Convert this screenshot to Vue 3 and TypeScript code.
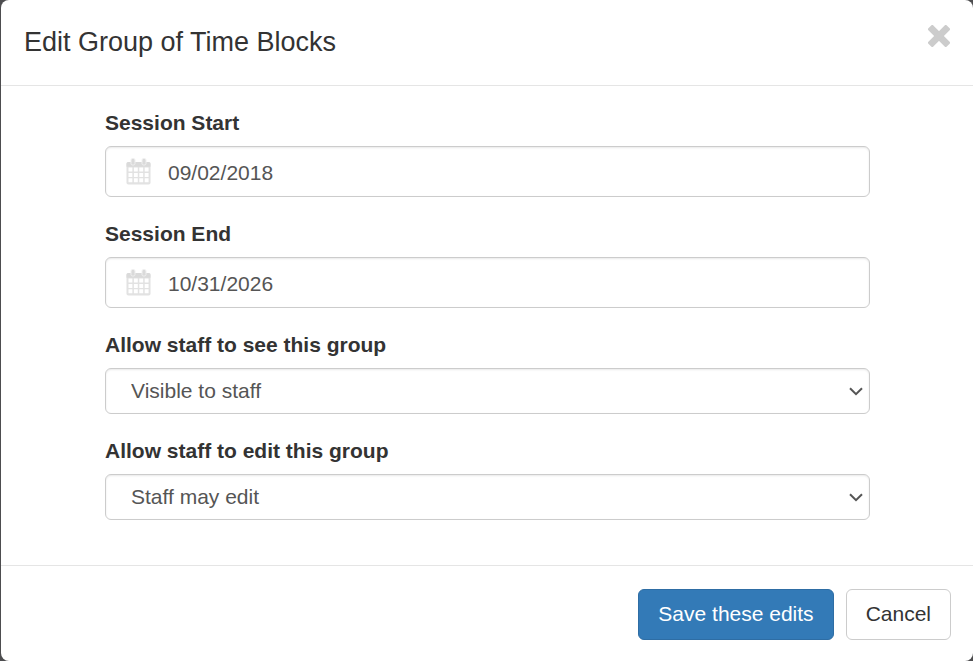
<script setup lang="ts">
import { ref } from 'vue'

interface DateField {
  id: string
  label: string
  value: string
}

interface SelectField extends DateField {
  options: string[]
}

const open = ref(true)

const dates = ref<DateField[]>([
  { id: 'session-start', label: 'Session Start', value: '09/02/2018' },
  { id: 'session-end', label: 'Session End', value: '10/31/2026' },
])

const permissions = ref<SelectField[]>([
  {
    id: 'staff-see',
    label: 'Allow staff to see this group',
    value: 'Visible to staff',
    options: ['Visible to staff', 'Hidden from staff'],
  },
  {
    id: 'staff-edit',
    label: 'Allow staff to edit this group',
    value: 'Staff may edit',
    options: ['Staff may edit', 'Staff may not edit'],
  },
])

function close(): void {
  open.value = false
}
</script>

<template>
  <div class="backdrop">
    <form v-if="open" class="dialog" role="dialog" aria-labelledby="dialog-title" @submit.prevent="close">
      <header class="header">
        <h1 id="dialog-title" class="title">Edit Group of Time Blocks</h1>
        <button type="button" class="close" aria-label="Close" @click="close">
          <svg viewBox="0 0 22 22" width="22" height="22" aria-hidden="true">
            <rect x="-2" y="7.500" width="26" height="7" rx="1.500" transform="rotate(45 11 11)" />
            <rect x="-2" y="7.500" width="26" height="7" rx="1.500" transform="rotate(-45 11 11)" />
          </svg>
        </button>
      </header>

      <div class="body">
        <div v-for="field in dates" :key="field.id" class="field">
          <label class="label" :for="field.id">{{ field.label }}</label>
          <div class="control date">
            <svg class="calendar" viewBox="0 0 25 27" width="25" height="27" aria-hidden="true">
              <rect class="page" x="0.500" y="4" width="24" height="22.500" rx="1.800" />
              <path class="band" d="M2.300 4H22.700Q24.500 4 24.500 5.800V8.800H.5V5.800Q.5 4 2.300 4Z" />
              <path
                class="cells"
                d="M2.500 9.600h3.900v4H2.500zM7.900 9.600h3.900v4H7.900zM13.300 9.600h3.900v4h-3.900zM18.700 9.600h3.900v4h-3.900zM2.500 14.900h3.900v4H2.500zM7.900 14.900h3.900v4H7.900zM13.300 14.900h3.900v4h-3.900zM18.700 14.900h3.900v4h-3.900zM2.500 20.200h3.900v4H2.500zM7.900 20.200h3.900v4H7.900zM13.300 20.200h3.900v4h-3.900zM18.700 20.200h3.900v4h-3.900z"
              />
              <rect class="ring" x="5" y="0.500" width="4" height="6.500" rx="1.500" />
              <rect class="ring" x="16" y="0.500" width="4" height="6.500" rx="1.500" />
            </svg>
            <input :id="field.id" v-model="field.value" class="date-input" type="text" />
          </div>
        </div>

        <div v-for="field in permissions" :key="field.id" class="field">
          <label class="label" :for="field.id">{{ field.label }}</label>
          <div class="select-wrap">
            <select :id="field.id" v-model="field.value" class="control select">
              <option v-for="option in field.options" :key="option">{{ option }}</option>
            </select>
            <svg class="chevron" viewBox="0 0 14 9" width="14" height="9" aria-hidden="true">
              <path d="M1 1.200 7 7.200 13 1.200" />
            </svg>
          </div>
        </div>
      </div>

      <footer class="footer">
        <button type="submit" class="button primary">Save these edits</button>
        <button type="button" class="button" @click="close">Cancel</button>
      </footer>
    </form>
  </div>
</template>

<style>
body {
  background: #4d4d4f;
}
</style>

<style scoped>
.backdrop {
  padding-left: 1px;
  font-family: "Liberation Sans", Arial, sans-serif;
  font-size: 21px;
  line-height: 30px;
  color: #333;
}

.dialog {
  background: #fff;
  border-radius: 8px;
}

.header {
  display: flex;
  align-items: flex-start;
  justify-content: space-between;
  padding: 23px;
  border-bottom: 1px solid #e5e5e5;
}

.title {
  margin: 0;
  font-size: 27px;
  font-weight: 400;
  line-height: 39px;
}

.close {
  display: flex;
  margin: 2px 0 0;
  padding: 0;
  border: 0;
  background: none;
  cursor: pointer;
}

.close rect {
  fill: #ccc;
}

.body {
  display: flex;
  flex-direction: column;
  gap: 22px;
  padding: 22px 103px 45px 104px;
}

.field {
  display: flex;
  flex-direction: column;
  gap: 8px;
}

.label {
  font-weight: 700;
}

.control {
  box-sizing: border-box;
  width: 100%;
  border: 1px solid #ccc;
  border-radius: 6px;
  background: #fff;
  box-shadow: inset 0 1px 2px rgba(0, 0, 0, 0.09);
  color: #555;
}

.date {
  display: flex;
  align-items: center;
  gap: 17px;
  height: 51px;
  padding: 0 20px;
}

.calendar {
  flex: none;
}

.page {
  fill: #e2e2e2;
}

.band {
  fill: #dadada;
}

.cells {
  fill: #fff;
}

.ring {
  fill: #dadada;
  stroke: #f0f0f0;
  stroke-width: 1;
}

.date-input {
  flex: 1;
  min-width: 0;
  padding: 2px 0 0;
  border: 0;
  outline: 0;
  background: none;
  font: inherit;
  color: inherit;
}

.select-wrap {
  display: grid;
  align-items: center;
}

.select-wrap > * {
  grid-area: 1 / 1;
}

.select {
  height: 46px;
  padding: 0 25px;
  appearance: none;
  font: inherit;
}

.chevron {
  justify-self: end;
  margin-right: 7px;
  pointer-events: none;
}

.chevron path {
  fill: none;
  stroke: #555;
  stroke-width: 2;
}

.footer {
  display: flex;
  justify-content: flex-end;
  gap: 12px;
  padding: 23px 22px 21px;
  border-top: 1px solid #e5e5e5;
}

.button {
  height: 51px;
  padding: 0 19px 2px;
  border: 1px solid #ccc;
  border-radius: 6px;
  background: #fff;
  font: inherit;
  color: #333;
  cursor: pointer;
}

.primary {
  border-color: #2e6da4;
  background: #337ab7;
  color: #fff;
}
</style>
